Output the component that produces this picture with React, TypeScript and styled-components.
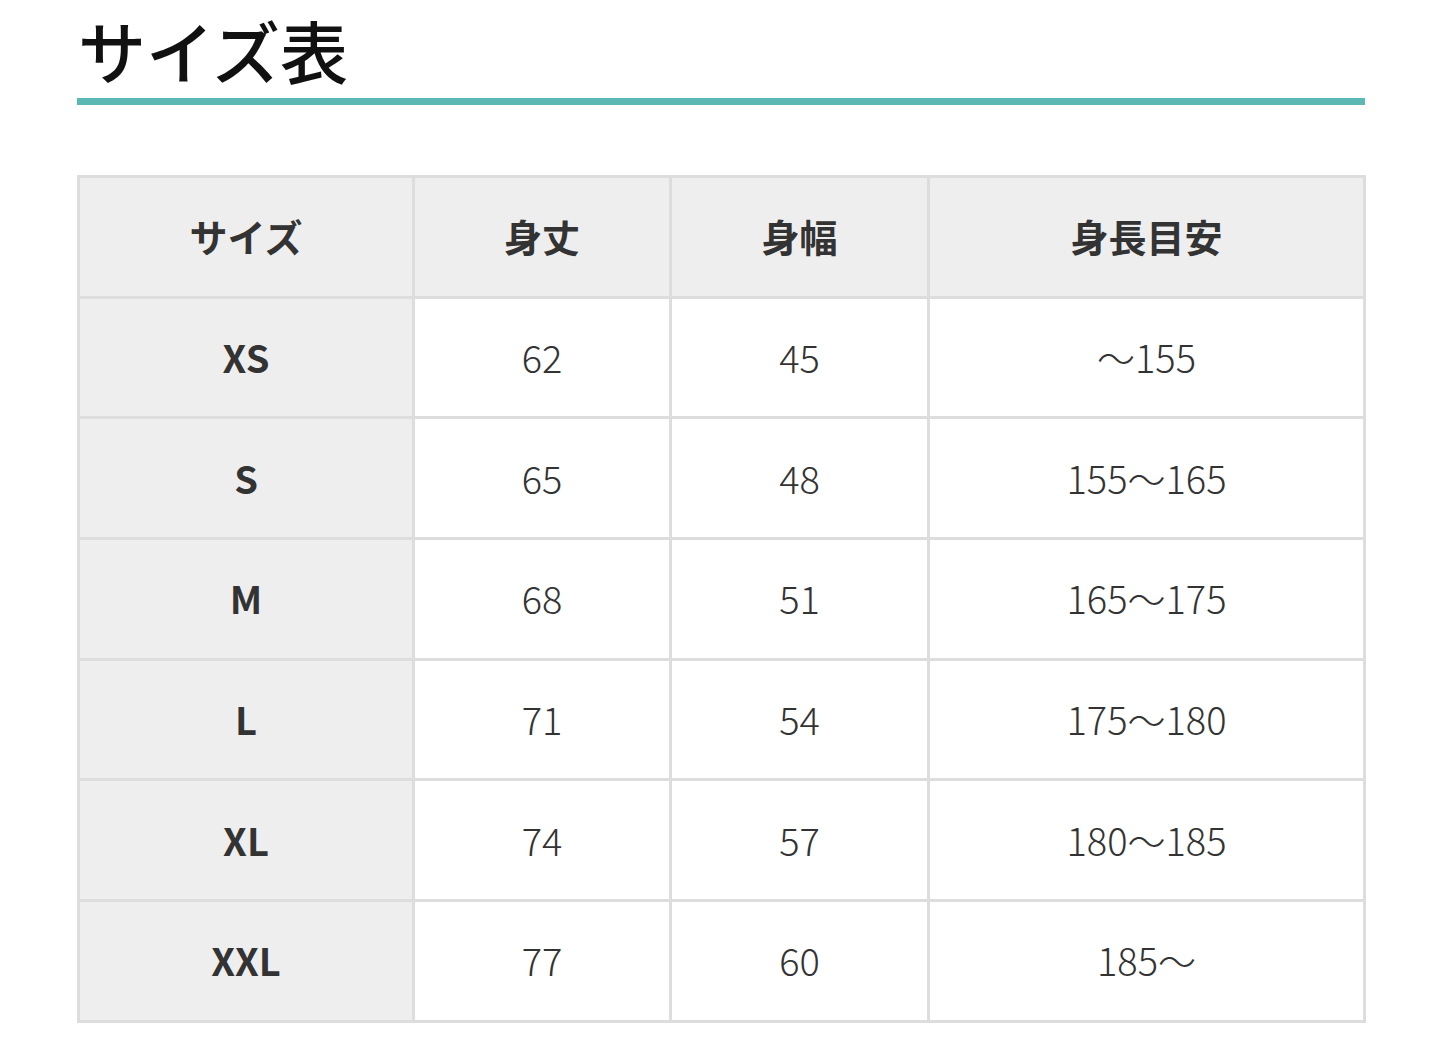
import React from 'react';
import styled, { createGlobalStyle } from 'styled-components';

const GlobalStyle = createGlobalStyle`
  body {
    margin: 0;
    background: #fff;
    font-family: "Noto Sans CJK JP", "Noto Sans", sans-serif;
    color: #333;
  }
`;

const Page = styled.div`
  padding: 0 75px 0 77px;
  width: 1288px;
`;

const Title = styled.h2`
  margin: 0;
  padding: 10px 0 8px 1px;
  font-size: 68px;
  line-height: 80px;
  font-weight: 500;
  color: #111;
  border-bottom: 7px solid #5bb8b4;
`;

const Table = styled.table`
  margin-top: 70px;
  width: 1286px;
  border-collapse: collapse;
  table-layout: fixed;
  border: 3px solid #ddd;
`;

const Cell = styled.td<{ head?: boolean }>`
  height: 115.7px;
  padding: 0 0 2px;
  border: 3px solid #ddd;
  text-align: center;
  vertical-align: middle;
  background: ${p => (p.head ? '#eee' : '#fff')};
  font-size: 38px;
  font-weight: ${p => (p.head ? 700 : 300)};
  color: #333;
`;

const columns = [
  { label: 'サイズ', width: 335 },
  { label: '身丈', width: 257 },
  { label: '身幅', width: 258 },
  { label: '身長目安', width: 436 },
];

const rows = [
  ['XS', '62', '45', '～155'],
  ['S', '65', '48', '155～165'],
  ['M', '68', '51', '165～175'],
  ['L', '71', '54', '175～180'],
  ['XL', '74', '57', '180～185'],
  ['XXL', '77', '60', '185～'],
];

export default function App() {
  return (
    <Page>
      <GlobalStyle />
      <Title>サイズ表</Title>
      <Table>
        <colgroup>
          {columns.map(c => (
            <col key={c.label} style={{ width: c.width }} />
          ))}
        </colgroup>
        <thead>
          <tr>
            {columns.map(c => (
              <Cell as="th" head key={c.label}>
                {c.label}
              </Cell>
            ))}
          </tr>
        </thead>
        <tbody>
          {rows.map(r => (
            <tr key={r[0]}>
              <Cell as="th" head>
                {r[0]}
              </Cell>
              {r.slice(1).map((v, i) => (
                <Cell key={i}>{v}</Cell>
              ))}
            </tr>
          ))}
        </tbody>
      </Table>
    </Page>
  );
}
